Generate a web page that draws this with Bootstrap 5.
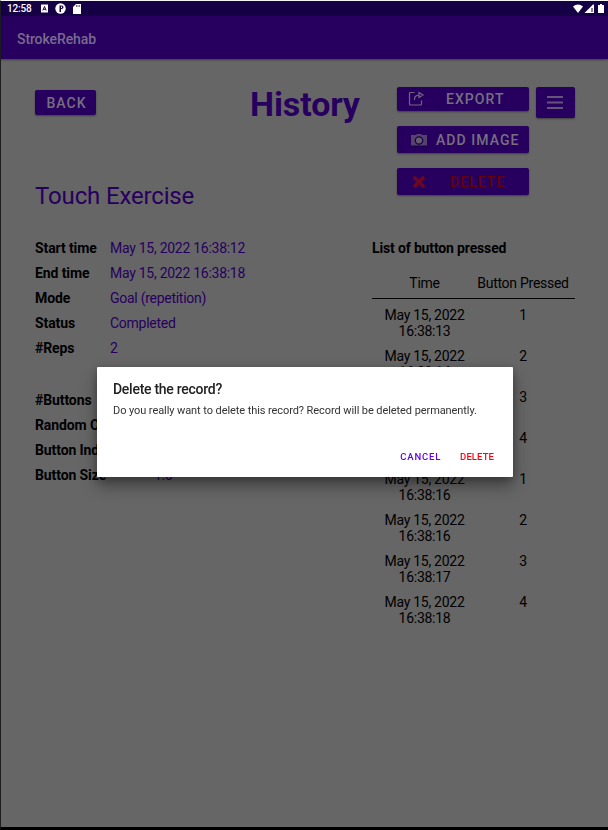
<!DOCTYPE html>
<html lang="en">
<head>
<meta charset="utf-8">
<meta name="viewport" content="width=device-width, initial-scale=1">
<title>StrokeRehab</title>
<link href="https://cdn.jsdelivr.net/npm/bootstrap@5.3.0/dist/css/bootstrap.min.css" rel="stylesheet">
<style>
:root{--purple:#27005f}
body{font-family:Roboto,"Liberation Sans",sans-serif;font-size:14px;letter-spacing:-.27px;line-height:16px;color:#000;background:#666;height:830px;overflow:hidden}
.screen{height:830px;border-left:1px solid #1e1e20;border-top:1px solid #f4f4f4;border-bottom:3px solid #000}
.status-bar{height:15px;background:#160045;color:#fff;font-size:10px;letter-spacing:-.15px;font-weight:500;padding:0 3px 0 6px}
.app-bar{height:43px;min-height:0;background:var(--purple);color:#786b8e;font-size:14px;font-weight:500;padding:3px 16px 0;box-shadow:0 1px 2px rgba(0,0,0,.4);letter-spacing:-.1px}
.page-head{height:109px;margin:28px 32px 0 34px}
.btn-app{--bs-btn-color:#757080;--bs-btn-bg:#27005f;--bs-btn-hover-bg:#27005f;--bs-btn-hover-color:#757080;border:0;border-radius:2px;font-size:14px;font-weight:500;line-height:16px;letter-spacing:1.05px;padding:0;box-shadow:0 1px 2px rgba(0,0,0,.4)}
.btn-back{width:61px;height:25px;margin-top:3px;padding-left:2px}
.page-title{font-size:34px;line-height:34px;font-weight:700;color:var(--purple);width:110px;margin-left:154px;letter-spacing:-.1px}
.actions{width:132px;margin-left:37px}
.btn-wide{width:132px;height:27px}
.btn-export{height:24px;margin-bottom:15px}
.btn-image{margin-bottom:15px}
.btn-menu{width:39px;height:31px;margin-left:7px}
.red-text{color:#670006!important}
.glyph-box{width:18px;height:16px;flex:none}
.exercise{font-size:24px;letter-spacing:-.15px;line-height:28px;color:var(--purple);margin:-14px 0 25px 34px;font-weight:400}
.details{margin:0 33px 0 34px}
.detail-row{height:25px;line-height:26px}
.detail-name{width:75px;letter-spacing:-.1px;font-weight:700;white-space:nowrap}
.detail-name-wide{width:119px}
.detail-value{color:var(--purple)}
.second-group{margin-top:27px}
.pressed-list{width:203px}
.pressed-title{height:25px;line-height:26px;font-weight:700;letter-spacing:-.15px}
.pressed-head{padding-top:15px;height:39px;border-bottom:1px solid #000}
.pressed-row{padding-top:9px}
.pressed-row:nth-child(3){padding-top:8px}
.time-col{width:105px}
.num-col{width:92px;white-space:nowrap}
.confirm-dialog{width:416px;max-width:416px;margin:367px 0 0 97px}
.confirm-dialog .modal-content{height:110px;border:0;border-radius:1px;box-shadow:0 9px 16px rgba(0,0,0,.36),0 2px 8px rgba(0,0,0,.26);padding:14px 16px 0}
.confirm-title{font-size:14px;letter-spacing:-.27px;line-height:16px;font-weight:500;color:#212121;margin:0 0 7px}
.confirm-text{font-size:11px;letter-spacing:-.08px;line-height:14px;color:#333;margin:0}
.confirm-actions{margin-top:32px;padding-right:3px;gap:19px}
.btn-flat{border:0;padding:0;font-size:9.5px;line-height:14px;font-weight:500}
.btn-cancel,.btn-cancel:hover{color:#6200ee;letter-spacing:.8px}
.btn-confirm,.btn-confirm:hover{color:#ff0010;letter-spacing:.1px}
</style>
</head>
<body>
<div class="screen">
  <div class="status-bar d-flex align-items-center">
    <span>12:58</span>
    <svg class="ms-2" width="9" height="9" viewBox="0 0 9 9"><path fill="#fff" d="M1 .5h7v8H1z"/><path d="M2.8 6.500 4.500 2.500l1.700 4M3.400 5.300h2.200" stroke="#160045" fill="none"/></svg>
    <svg width="11" height="11" viewBox="0 0 11 11" style="margin-left:6px"><circle cx="5.500" cy="5.500" r="5.200" fill="#fff"/><path d="M4.500 9V2.500h2Q8.500 2.500 8.500 4.300T6.500 6.100H6V9z" fill="#160045"/><path d="M6 3.600h1v1.400H6z" fill="#fff"/></svg>
    <svg width="8" height="10" viewBox="0 0 8 10" style="margin-left:7px"><path fill="#fff" d="M3 0h5v10H0V3z"/><path d="M3.500 1v2M5 1v2M6.600 1v2" stroke="#160045" stroke-width=".6"/></svg>
    <svg class="ms-auto" width="10" height="9" viewBox="0 0 10 9"><path fill="#fff" d="M0 2.500Q5-1.500 10 2.500L5 9z"/></svg>
    <svg class="ms-1" width="8" height="9" viewBox="0 0 8 9" overflow="visible"><path fill="#fff" d="M-2.500 9 6 .5V9z"/><path d="M6.500 .5v8.500" stroke="#fff"/><path d="M5 4v4" stroke="#160045"/></svg>
    <svg width="6" height="9" viewBox="0 0 6 9" style="margin-left:3px;margin-right:1px"><path fill="#fff" d="M2 0h2v1h2v8H0V1h2z"/></svg>
  </div>
  <nav class="app-bar navbar">StrokeRehab</nav>

  <header class="page-head d-flex align-items-start">
    <button class="btn btn-app btn-back">BACK</button>
    <h1 class="page-title mb-0">History</h1>
    <div class="actions d-flex flex-column">
      <button class="btn btn-app btn-wide btn-export d-flex align-items-center">
        <svg class="glyph-box" style="margin-left:11px" viewBox="0 0 18 16"><path d="M6.500 1.500H2.500Q1.500 1.500 1.500 2.500v10.500q0 1 1 1h10q1 0 1-1V9.500M6.500 9Q6 4.500 11 4M11 1.500v5l4-2.500z" fill="none" stroke="#70667f" stroke-width="1.200"/></svg>
        <span style="margin-left:20px">EXPORT</span>
      </button>
      <button class="btn btn-app btn-wide btn-image d-flex align-items-center">
        <svg class="glyph-box" style="margin-left:13px" viewBox="0 0 18 16"><path d="M1 3h5l1-1h4l1 1h5v11H1z" fill="#54436c"/><circle cx="9" cy="8.500" r="3.700" fill="#665c72" stroke="#1b0044" stroke-width="1.300"/><path d="M1 14h16" stroke="#1b0044"/></svg>
        <span style="margin-left:8px">ADD IMAGE</span>
      </button>
      <button class="btn btn-app btn-wide d-flex align-items-center red-text">
        <svg class="glyph-box" style="margin-left:13px" viewBox="0 0 18 16"><path d="m5 4 8 8M13 4l-8 8" stroke="#6d0721" stroke-width="3.600" stroke-linecap="round"/></svg>
        <span style="margin-left:22px">DELETE</span>
      </button>
    </div>
    <button class="btn btn-app btn-menu d-flex align-items-center justify-content-center" aria-label="Menu">
      <svg width="16" height="14" viewBox="0 0 16 14" style="margin-right:2px"><path d="M0 1h16M0 6.500h16M0 12h16" stroke="#645676" stroke-width="2"/></svg>
    </button>
  </header>

  <h2 class="exercise">Touch Exercise</h2>

  <main class="details d-flex justify-content-between">
    <section>
      <div class="detail-row d-flex"><div class="detail-name">Start time</div><div class="detail-value">May 15, 2022 16:38:12</div></div>
      <div class="detail-row d-flex"><div class="detail-name">End time</div><div class="detail-value">May 15, 2022 16:38:18</div></div>
      <div class="detail-row d-flex"><div class="detail-name">Mode</div><div class="detail-value">Goal (repetition)</div></div>
      <div class="detail-row d-flex"><div class="detail-name">Status</div><div class="detail-value">Completed</div></div>
      <div class="detail-row d-flex"><div class="detail-name">#Reps</div><div class="detail-value">2</div></div>
      <div class="second-group">
        <div class="detail-row d-flex"><div class="detail-name detail-name-wide">#Buttons</div></div>
        <div class="detail-row d-flex"><div class="detail-name detail-name-wide">Random Order</div></div>
        <div class="detail-row d-flex"><div class="detail-name detail-name-wide">Button Indication</div></div>
        <div class="detail-row d-flex"><div class="detail-name detail-name-wide">Button Size</div><div class="detail-value">1.0</div></div>
      </div>
    </section>
    <section class="pressed-list">
      <div class="pressed-title">List of button pressed</div>
      <div class="pressed-head d-flex text-center"><div class="time-col">Time</div><div class="num-col">Button Pressed</div></div>
      <div class="pressed-row d-flex text-center"><div class="time-col">May 15, 2022<br>16:38:13</div><div class="num-col">1</div></div>
      <div class="pressed-row d-flex text-center"><div class="time-col">May 15, 2022<br>16:38:14</div><div class="num-col">2</div></div>
      <div class="pressed-row d-flex text-center"><div class="time-col">May 15, 2022<br>16:38:14</div><div class="num-col">3</div></div>
      <div class="pressed-row d-flex text-center"><div class="time-col">May 15, 2022<br>16:38:15</div><div class="num-col">4</div></div>
      <div class="pressed-row d-flex text-center"><div class="time-col">May 15, 2022<br>16:38:16</div><div class="num-col">1</div></div>
      <div class="pressed-row d-flex text-center"><div class="time-col">May 15, 2022<br>16:38:16</div><div class="num-col">2</div></div>
      <div class="pressed-row d-flex text-center"><div class="time-col">May 15, 2022<br>16:38:17</div><div class="num-col">3</div></div>
      <div class="pressed-row d-flex text-center"><div class="time-col">May 15, 2022<br>16:38:18</div><div class="num-col">4</div></div>
    </section>
  </main>
</div>

<div class="modal d-block overflow-hidden" role="dialog">
  <div class="modal-dialog confirm-dialog">
    <div class="modal-content">
      <h3 class="confirm-title">Delete the record?</h3>
      <p class="confirm-text">Do you really want to delete this record? Record will be deleted permanently.</p>
      <div class="confirm-actions d-flex justify-content-end">
        <button class="btn btn-flat btn-cancel">CANCEL</button>
        <button class="btn btn-flat btn-confirm">DELETE</button>
      </div>
    </div>
  </div>
</div>
<script src="https://cdn.jsdelivr.net/npm/bootstrap@5.3.0/dist/js/bootstrap.bundle.min.js"></script>
</body>
</html>
